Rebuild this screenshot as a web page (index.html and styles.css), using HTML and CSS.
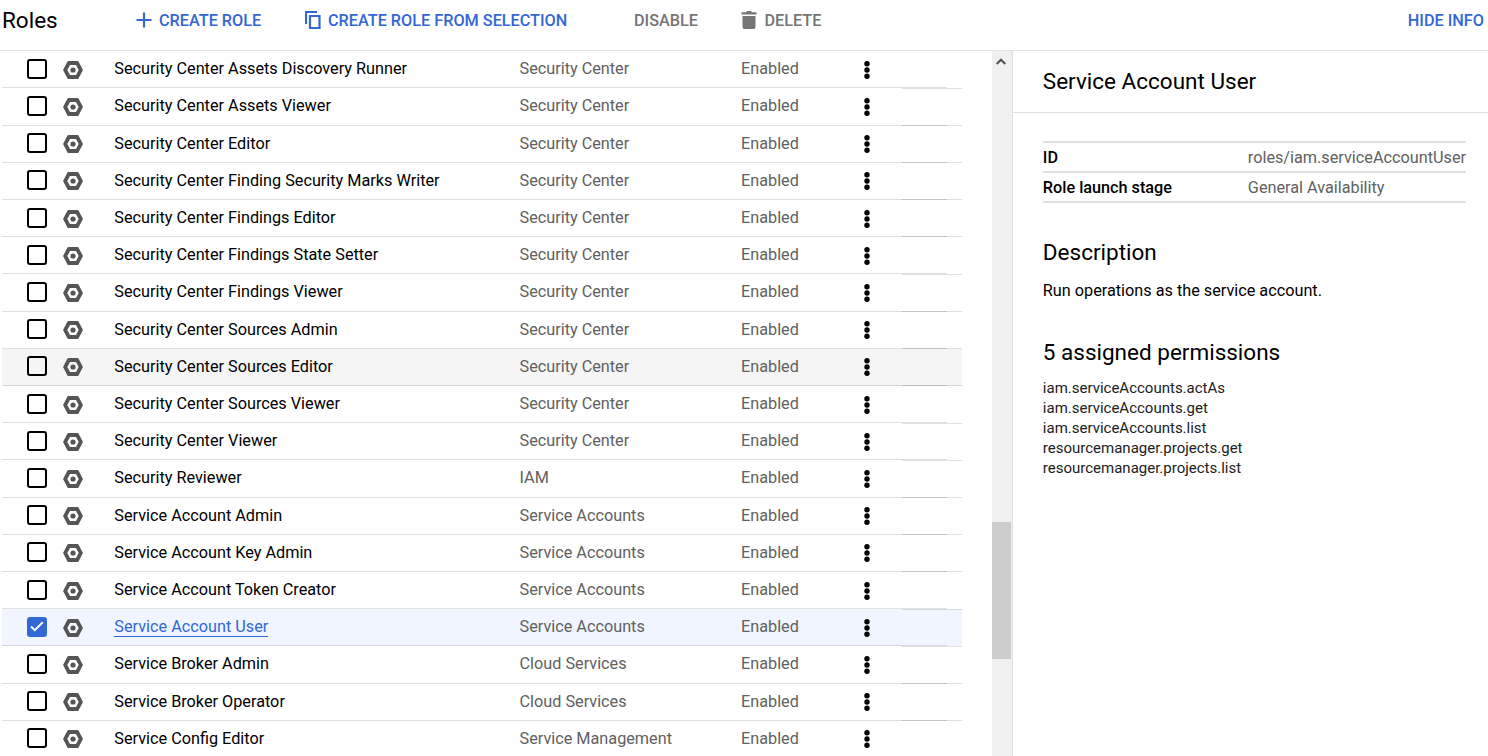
FILE: index.html
```html
<!DOCTYPE html>
<html lang="en">
<head>
<meta charset="utf-8">
<title>Roles</title>
<link rel="stylesheet" href="styles.css">
</head>
<body>
<svg class="defs" aria-hidden="true">
  <symbol id="role" viewBox="0 0 20 18"><path fill-rule="evenodd" d="M5.4 0h9.2Q15.2 0 15.5.5L19.7 8.4Q20 9 19.7 9.600L15.500 17.500Q15.200 18 14.600 18H5.400Q4.800 18 4.500 17.500L.3 9.600Q0 9 .3 8.400L4.500.5Q4.800 0 5.400 0ZM7 4L4.300 9 7 14h6l2.700-5L13 4Z"/><circle cx="10" cy="9" r="2.600"/></symbol>
  <symbol id="more" viewBox="0 0 6 18"><circle cx="3" cy="2.700" r="2.700"/><circle cx="3" cy="9" r="2.700"/><circle cx="3" cy="15.300" r="2.700"/></symbol>
</svg>
<header class="toolbar">
  <h1 class="toolbar-title">Roles</h1>
  <button class="action create"><svg width="16" height="16" viewBox="0 0 16 16"><path d="M8 .5v15M.5 8h15" stroke="currentColor" stroke-width="2.200"/></svg><span>CREATE ROLE</span></button>
  <button class="action copy"><svg width="16" height="18" viewBox="0 0 16 18"><path d="M1 13V1h11M5 5h9.500v12H5Z" fill="none" stroke="currentColor" stroke-width="2.200"/></svg><span>CREATE ROLE FROM SELECTION</span></button>
  <button class="action disable"><span>DISABLE</span></button>
  <button class="action delete"><svg width="16" height="18" viewBox="0 0 16 18"><path fill="currentColor" d="M1.500 5h13v11q0 2-2 2h-9q-2 0-2-2ZM.5 1.200h4.500L6 0h4l1 1.200h4.500v2.300H.5Z"/></svg><span>DELETE</span></button>
  <button class="action hide"><span>HIDE INFO</span></button>
</header>
<main class="content">
  <section class="list">
    <div class="row"><span class="box"></span><svg class="role"><use href="#role"/></svg><span class="name">Security Center Assets Discovery Runner</span><span class="used">Security Center</span><span class="status">Enabled</span><svg class="more"><use href="#more"/></svg></div>
    <div class="row"><span class="box"></span><svg class="role"><use href="#role"/></svg><span class="name">Security Center Assets Viewer</span><span class="used">Security Center</span><span class="status">Enabled</span><svg class="more"><use href="#more"/></svg></div>
    <div class="row"><span class="box"></span><svg class="role"><use href="#role"/></svg><span class="name">Security Center Editor</span><span class="used">Security Center</span><span class="status">Enabled</span><svg class="more"><use href="#more"/></svg></div>
    <div class="row"><span class="box"></span><svg class="role"><use href="#role"/></svg><span class="name">Security Center Finding Security Marks Writer</span><span class="used">Security Center</span><span class="status">Enabled</span><svg class="more"><use href="#more"/></svg></div>
    <div class="row"><span class="box"></span><svg class="role"><use href="#role"/></svg><span class="name">Security Center Findings Editor</span><span class="used">Security Center</span><span class="status">Enabled</span><svg class="more"><use href="#more"/></svg></div>
    <div class="row"><span class="box"></span><svg class="role"><use href="#role"/></svg><span class="name">Security Center Findings State Setter</span><span class="used">Security Center</span><span class="status">Enabled</span><svg class="more"><use href="#more"/></svg></div>
    <div class="row"><span class="box"></span><svg class="role"><use href="#role"/></svg><span class="name">Security Center Findings Viewer</span><span class="used">Security Center</span><span class="status">Enabled</span><svg class="more"><use href="#more"/></svg></div>
    <div class="row"><span class="box"></span><svg class="role"><use href="#role"/></svg><span class="name">Security Center Sources Admin</span><span class="used">Security Center</span><span class="status">Enabled</span><svg class="more"><use href="#more"/></svg></div>
    <div class="row hovered"><span class="box"></span><svg class="role"><use href="#role"/></svg><span class="name">Security Center Sources Editor</span><span class="used">Security Center</span><span class="status">Enabled</span><svg class="more"><use href="#more"/></svg></div>
    <div class="row"><span class="box"></span><svg class="role"><use href="#role"/></svg><span class="name">Security Center Sources Viewer</span><span class="used">Security Center</span><span class="status">Enabled</span><svg class="more"><use href="#more"/></svg></div>
    <div class="row"><span class="box"></span><svg class="role"><use href="#role"/></svg><span class="name">Security Center Viewer</span><span class="used">Security Center</span><span class="status">Enabled</span><svg class="more"><use href="#more"/></svg></div>
    <div class="row"><span class="box"></span><svg class="role"><use href="#role"/></svg><span class="name">Security Reviewer</span><span class="used">IAM</span><span class="status">Enabled</span><svg class="more"><use href="#more"/></svg></div>
    <div class="row"><span class="box"></span><svg class="role"><use href="#role"/></svg><span class="name">Service Account Admin</span><span class="used">Service Accounts</span><span class="status">Enabled</span><svg class="more"><use href="#more"/></svg></div>
    <div class="row"><span class="box"></span><svg class="role"><use href="#role"/></svg><span class="name">Service Account Key Admin</span><span class="used">Service Accounts</span><span class="status">Enabled</span><svg class="more"><use href="#more"/></svg></div>
    <div class="row"><span class="box"></span><svg class="role"><use href="#role"/></svg><span class="name">Service Account Token Creator</span><span class="used">Service Accounts</span><span class="status">Enabled</span><svg class="more"><use href="#more"/></svg></div>
    <div class="row selected"><span class="box checked"><svg width="14" height="11" viewBox="0 0 14 11"><path d="M1 5.500L4.800 9.200 12.800 1.200" fill="none" stroke="#fff" stroke-width="2"/></svg></span><svg class="role"><use href="#role"/></svg><span class="name"><a class="link">Service Account User</a></span><span class="used">Service Accounts</span><span class="status">Enabled</span><svg class="more"><use href="#more"/></svg></div>
    <div class="row"><span class="box"></span><svg class="role"><use href="#role"/></svg><span class="name">Service Broker Admin</span><span class="used">Cloud Services</span><span class="status">Enabled</span><svg class="more"><use href="#more"/></svg></div>
    <div class="row"><span class="box"></span><svg class="role"><use href="#role"/></svg><span class="name">Service Broker Operator</span><span class="used">Cloud Services</span><span class="status">Enabled</span><svg class="more"><use href="#more"/></svg></div>
    <div class="row"><span class="box"></span><svg class="role"><use href="#role"/></svg><span class="name">Service Config Editor</span><span class="used">Service Management</span><span class="status">Enabled</span><svg class="more"><use href="#more"/></svg></div>
  </section>
  <div class="scrollbar"><svg width="10" height="7" viewBox="0 0 10 7"><path d="M.7 6L5 1.700 9.300 6" fill="none" stroke="#505050" stroke-width="2"/></svg><div class="thumb"></div></div>
  <aside class="panel">
    <h2 class="panel-title">Service Account User</h2>
    <div class="panel-body">
      <dl class="facts">
        <div class="fact"><dt>ID</dt><dd>roles/iam.serviceAccountUser</dd></div>
        <div class="fact"><dt>Role launch stage</dt><dd>General Availability</dd></div>
      </dl>
      <h3 class="heading">Description</h3>
      <p class="description">Run operations as the service account.</p>
      <h3 class="heading perms-heading">5 assigned permissions</h3>
      <ul class="perms">
        <li>iam.serviceAccounts.actAs</li>
        <li>iam.serviceAccounts.get</li>
        <li>iam.serviceAccounts.list</li>
        <li>resourcemanager.projects.get</li>
        <li>resourcemanager.projects.list</li>
      </ul>
    </div>
  </aside>
</main>
</body>
</html>
```
FILE: styles.css
```css
* { box-sizing: border-box; margin: 0; padding: 0; }
body { height: 756px; overflow: hidden; display: flex; flex-direction: column; background: #fff; color: #000; font: 16.240px/20px Roboto, sans-serif; }
.defs { display: none; }
svg { flex: none; }
.toolbar { flex: none; height: 51px; border-bottom: 1px solid #e0e0e0; display: flex; align-items: flex-start; padding: 10px 4px 0 2px; }
.toolbar-title { font-size: 22.500px; font-weight: 400; width: 134px; line-height: 28px; margin-top: -4px; }
.action { display: flex; align-items: center; height: 20px; border: 0; background: none; font: 500 16.240px/20px Roboto, sans-serif; color: #3367d6; white-space: nowrap; }
.action span { padding-top: 2px; }
.create { width: 169px; gap: 7px; }
.copy { width: 329px; gap: 7px; }
.disable { width: 107px; color: #757575; }
.delete { gap: 7.500px; color: #757575; }
.hide { margin-left: auto; }
.content { flex: 1; min-height: 0; display: flex; }
.list { width: 992px; padding: .2px 30px 0 2px; overflow: hidden; }
.row { position: relative; height: 37.210px; display: grid; grid-template-columns: 20px 41px 431.500px 221.500px 123px 8px; padding-left: 25px; align-items: center; }
.row::before { content: ""; position: absolute; left: 0; width: 945px; bottom: 0; height: 1px; background: rgba(0, 0, 0, .12); }
.row::after { content: ""; position: absolute; z-index: 1; right: 0; width: 60px; bottom: -.282px; height: 1px; background: rgba(0, 0, 0, .12); }
.hovered { background: #f5f5f5; }
.selected { background: #f0f5ff; }
.box { width: 20px; height: 20px; border: 2px solid #000; border-radius: 3px; margin-bottom: 2.200px; }
.checked { background: #3367d6; border-color: #3367d6; padding: 2px 0 0 1px; display: flex; }
.role { width: 20px; height: 18px; margin: 0 0 0 16px; fill: #555; }
.name { padding-left: 26.300px; }
.row .name, .row .used, .row .status { margin-bottom: 1.200px; white-space: nowrap; }
.used, .status { color: #616161; }
.more { width: 6px; height: 18px; }
.link { color: #3367d6; border-bottom: 1px solid #3367d6; }
.scrollbar { width: 20px; background: #f0f0f0; padding-top: 7px; display: flex; flex-direction: column; }
.scrollbar svg { margin-left: 4.400px; }
.thumb { width: 19px; height: 137px; margin-top: 457px; background: #cdcdcd; }
.panel { flex: 1; border-left: 1px solid #e0e0e0; }
.panel-title, .heading { font-size: 22.500px; font-weight: 400; line-height: 28px; }
.panel-title { height: 62px; padding: 16px 30px 0 30.300px; border-bottom: 1px solid #e0e0e0; }
.panel-body { padding: 28px 22px 0 30px; }
.facts { border-top: 2px solid #e0e0e0; }
.fact { display: flex; height: 30px; border-bottom: 2px solid #e0e0e0; padding: 5px 0 0 .3px; }
dt { width: 205px; font-weight: 500; }
dd { color: #616161; white-space: nowrap; }
.heading { margin: 35px 0 0 .3px; }
.description { margin: 15px 0 0 .3px; }
.perms-heading { margin-top: 37px; }
.perms { list-style: none; margin: 12px 0 0 .3px; font-size: 15px; color: #212121; }
```
